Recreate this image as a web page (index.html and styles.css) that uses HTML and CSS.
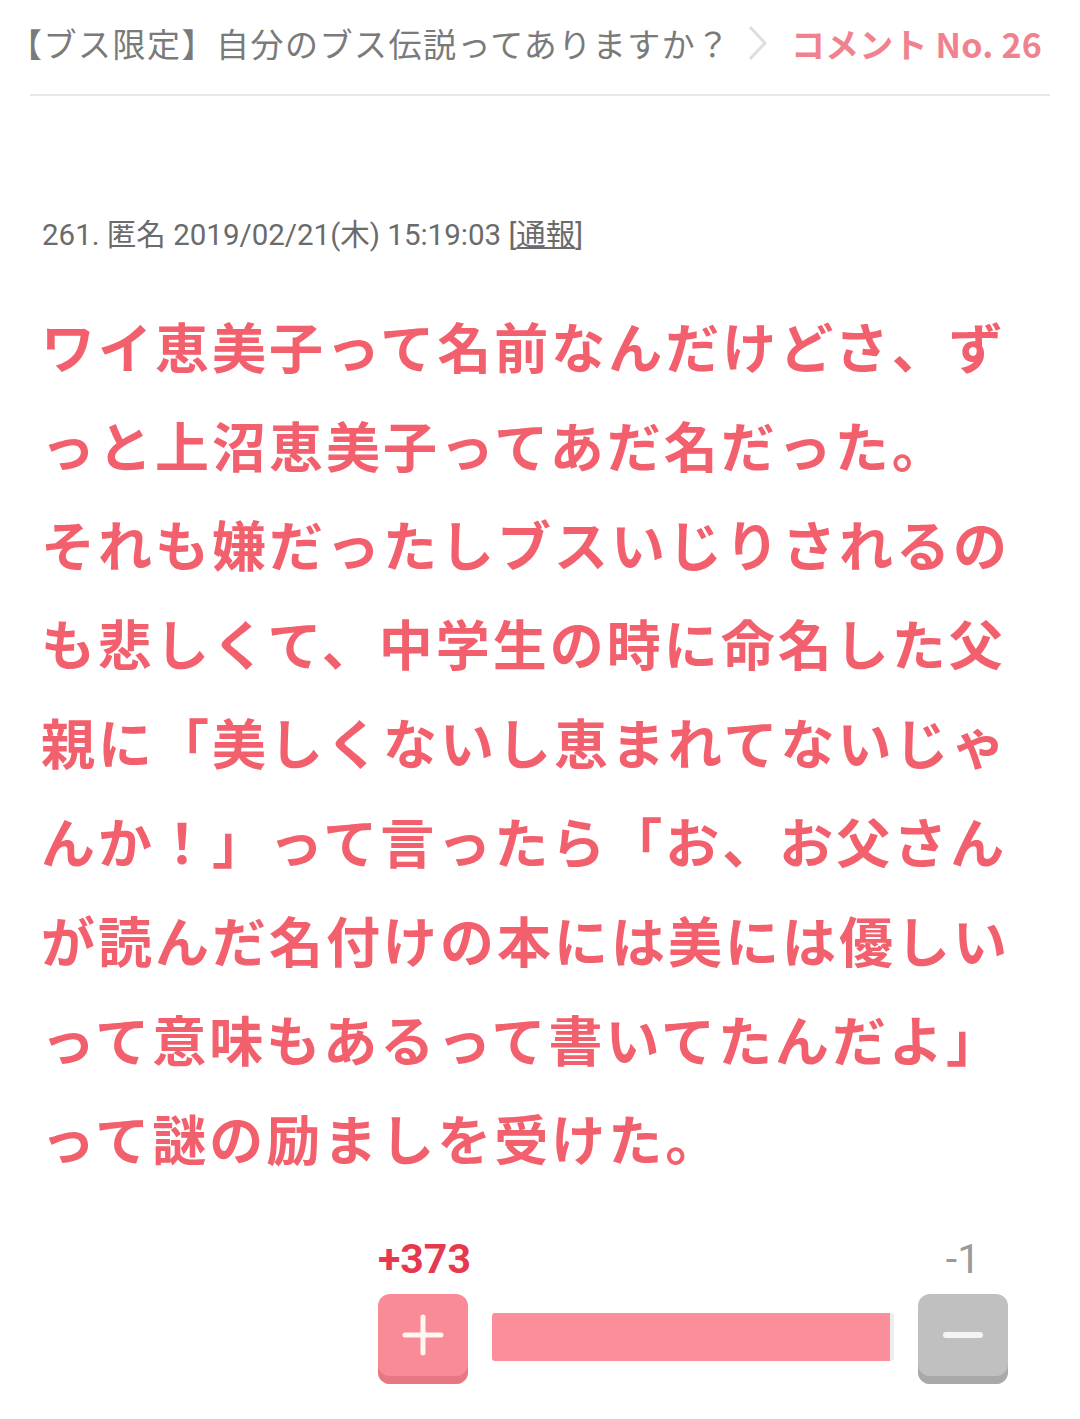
FILE: index.html
```html
<!DOCTYPE html>
<html lang="ja">
<head>
<meta charset="utf-8">
<link rel="stylesheet" href="styles.css">
</head>
<body>
<header class="crumb">
  <span class="crumb-title">【ブス限定】自分のブス伝説ってありますか？</span>
  <svg class="crumb-chev" width="22" height="38" viewBox="0 0 22 38"><path d="M3 3 L18 19 L3 35" fill="none" stroke="#dedede" stroke-width="3"/></svg>
  <span class="crumb-no">コメント No. 26</span>
</header>
<div class="divider"></div>

<article class="comment">
  <div class="meta">261. 匿名 2019/02/21(木) 15:19:03 <span class="report">[<u>通報</u>]</span></div>
  <p class="body">ワイ恵美子って名前なんだけどさ、ずっと上沼恵美子ってあだ名だった。<br>それも嫌だったしブスいじりされるのも悲しくて、中学生の時に命名した父親に「美しくないし恵まれてないじゃんか！」って言ったら「お、お父さんが読んだ名付けの本には美には優しいって意味もあるって書いてたんだよ」って謎の励ましを受けた。</p>

  <div class="vote">
    <div class="vote-labels">
      <span class="plus-count">+373</span>
      <span class="minus-count">-1</span>
    </div>
    <div class="vote-row">
      <div class="btn btn-plus">
        <svg width="44" height="44" viewBox="0 0 44 44"><path d="M22 4 V40 M4 22 H40" stroke="#fff7f0" stroke-width="5" stroke-linecap="round"/></svg>
      </div>
      <div class="bar"><div class="bar-fill" style="width:99%"></div></div>
      <div class="btn btn-minus">
        <svg width="44" height="44" viewBox="0 0 44 44"><path d="M5 22 H39" stroke="#f4f4f4" stroke-width="6" stroke-linecap="round"/></svg>
      </div>
    </div>
  </div>
</article>
</body>
</html>
```

FILE: styles.css
```css
* { box-sizing: border-box; }
html, body { margin: 0; padding: 0; background: #fff; }
body {
  width: 1080px;
  font-family: "Noto Sans CJK JP", "Noto Sans", sans-serif;
}
.crumb {
  display: flex;
  align-items: center;
  height: 86px;
  padding: 0 0 0 9px;
}
.crumb-title {
  font-size: 33px;
  color: #7a7a7a;
  letter-spacing: 1.5px;
  white-space: nowrap;
}
.crumb-chev {
  margin: 0 22px 0 16px;
  flex: none;
}
.crumb-no {
  font-size: 34px;
  font-weight: 700;
  color: #f0828f;
  letter-spacing: 0.2px;
  white-space: nowrap;
}
.divider {
  height: 2px;
  background: #e8e8e8;
  margin: 8px 30px 0;
}
.comment {
  padding: 119px 0 0 42px;
}
.meta {
  font-size: 29.5px;
  line-height: 40px;
  color: #6b6b6b;
  font-family: "Roboto", "Noto Sans CJK JP", sans-serif;
}
.meta .report { color: #6b6b6b; }
.body {
  margin: 41px 0 0 -1px;
  width: 990px;
  font-size: 54px;
  line-height: 99px;
  letter-spacing: 3px;
  font-weight: 700;
  color: #f2606e;
}
.vote {
  margin: 52px 0 0 336px;
  width: 630px;
}
.vote-labels {
  display: flex;
  justify-content: space-between;
  height: 40px;
  align-items: center;
}
.plus-count {
  font-family: "Roboto", sans-serif;
  font-weight: 700;
  font-size: 41px;
  color: #e6394e;
  width: 90px;
  text-align: center;
}
.minus-count {
  font-family: "Roboto", sans-serif;
  font-size: 41px;
  color: #9a9a9a;
  width: 90px;
  text-align: center;
}
.vote-row {
  display: flex;
  align-items: center;
  margin-top: 15px;
}
.btn {
  width: 90px;
  height: 90px;
  border-radius: 12px;
  display: flex;
  align-items: center;
  justify-content: center;
  padding-bottom: 8px;
  flex: none;
}
.btn-plus {
  background: #f98b97;
  box-shadow: inset 0 -8px 0 #e77783;
}
.btn-minus {
  background: #c0c0c0;
  box-shadow: inset 0 -8px 0 #a9a9a9;
}
.bar {
  flex: 1;
  margin: 0 24px 4px 24px;
  height: 48px;
  background: #ededed;
  border-radius: 3px;
  overflow: hidden;
}
.bar-fill {
  height: 100%;
  background: #fa8e9a;
}
```
